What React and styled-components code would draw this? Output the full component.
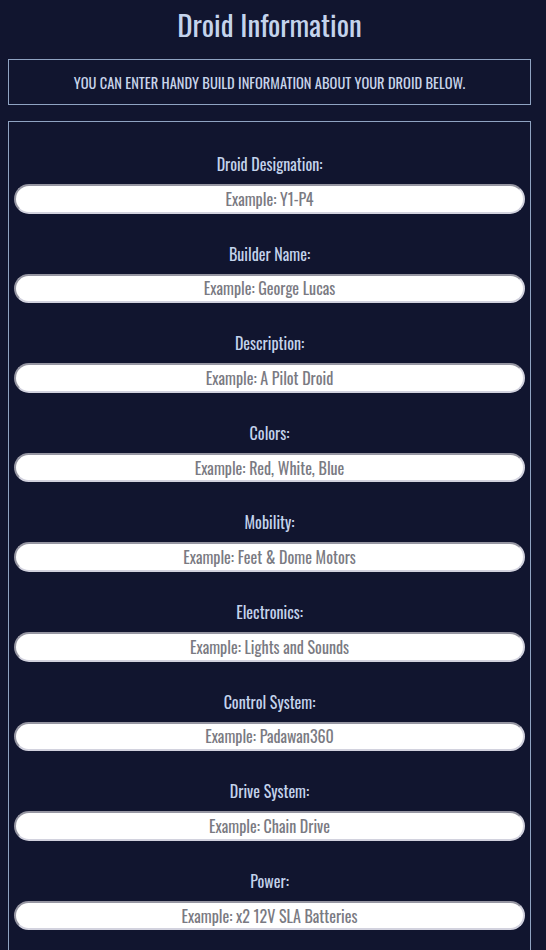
import React from "react";
import styled, { createGlobalStyle } from "styled-components";

const FONT = `"Oswald", "Liberation Sans Narrow", "DejaVu Sans Condensed", "Roboto Condensed", "Liberation Sans", sans-serif`;

const Global = createGlobalStyle`
  html, body {
    margin: 0;
    padding: 0;
    background: #11152f;
  }
  body {
    font-family: ${FONT};
  }
`;

const Page = styled.div`
  width: 523px;
  padding: 0 0 0 8px;
  display: flex;
  flex-direction: column;
`;

const Title = styled.h1`
  margin: 0;
  height: 50px;
  line-height: 47px;
  text-align: center;
  font-size: 29px;
  font-weight: 400;
  color: #c4d3ec;
`;

const Notice = styled.div`
  margin-top: 9px;
  height: 44px;
  border: 1px solid #8fa3c2;
  display: flex;
  align-items: center;
  justify-content: center;
  font-size: 14.5px;
  text-transform: uppercase;
  color: #c8d4ea;
`;

const FormBox = styled.div`
  margin-top: 16px;
  border: 1px solid #8fa3c2;
  border-bottom: none;
  padding: 30px 5px 40px;
  display: flex;
  flex-direction: column;
  gap: 28px;
`;

const Field = styled.div`
  display: flex;
  flex-direction: column;
  gap: 8px;
`;

const Label = styled.label`
  display: block;
  text-align: center;
  font-size: 16px;
  line-height: 24px;
  color: #c4d3ec;
`;

const Input = styled.input`
  box-sizing: border-box;
  width: 100%;
  height: 29.6px;
  border-radius: 15px;
  border: 2px solid;
  border-top-color: #9696a2;
  border-left-color: #9696a2;
  border-right-color: #d2d2de;
  border-bottom-color: #d2d2de;
  background: #ffffff;
  text-align: center;
  font-family: ${FONT};
  font-size: 16px;
  color: #333;
  outline: none;
  padding: 0 10px;
  &::placeholder {
    color: #7a7a82;
  }
`;

const fields = [
  ["Droid Designation:", "Example: Y1-P4"],
  ["Builder Name:", "Example: George Lucas"],
  ["Description:", "Example: A Pilot Droid"],
  ["Colors:", "Example: Red, White, Blue"],
  ["Mobility:", "Example: Feet & Dome Motors"],
  ["Electronics:", "Example: Lights and Sounds"],
  ["Control System:", "Example: Padawan360"],
  ["Drive System:", "Example: Chain Drive"],
  ["Power:", "Example: x2 12V SLA Batteries"],
];

export default function App() {
  return (
    <>
      <Global />
      <Page>
        <Title>Droid Information</Title>
        <Notice>You can enter handy build information about your droid below.</Notice>
        <FormBox>
          {fields.map(([label, ph]) => (
            <Field key={label}>
              <Label>{label}</Label>
              <Input placeholder={ph} />
            </Field>
          ))}
        </FormBox>
      </Page>
    </>
  );
}
